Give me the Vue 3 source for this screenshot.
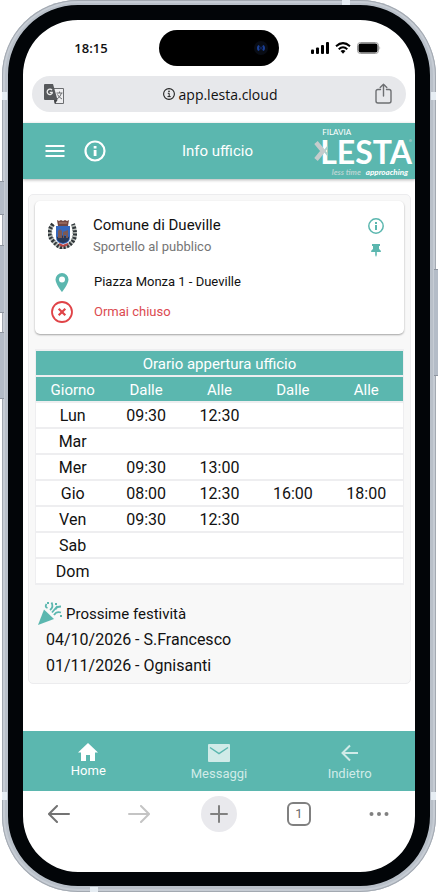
<template>
  <div class="stage">
    <div class="phone">
      <i class="side-key key-silent" />
      <i class="side-key key-up" />
      <i class="side-key key-down" />
      <i class="side-key key-power" />
      <i class="band band-top" />
      <i class="band band-bottom" />
      <i class="band band-side left upper" />
      <i class="band band-side right upper" />
      <i class="band band-side left lower" />
      <i class="band band-side right lower" />

      <div class="screen">
        <div class="status">
          <span class="time">18:15</span>
          <span class="island">
            <svg width="16" height="16" viewBox="0 0 16 16">
              <circle cx="8" cy="8" r="7" fill="#080c14" />
              <path d="M6 5.500Q4 8 6 10.500M10 5.500Q12 8 10 10.500" fill="none" stroke="#1b3f94" stroke-width="2" />
              <circle cx="8" cy="8" r="1.500" fill="#0c1f55" />
            </svg>
          </span>
          <span class="signals">
            <svg width="18" height="12" viewBox="0 0 18 12">
              <rect x="0" y="7.500" width="3" height="4.500" rx="1" />
              <rect x="5" y="5.500" width="3" height="6.500" rx="1" />
              <rect x="10" y="3" width="3" height="9" rx="1" />
              <rect x="15" y="0" width="3" height="12" rx="1" />
            </svg>
            <svg width="16" height="12" viewBox="0 0 16 12">
              <g fill="none" stroke="#000" stroke-width="2">
                <path d="M1 4.200Q8-2 15 4.200" />
                <path d="M3.700 7.200Q8 3.400 12.300 7.200" />
              </g>
              <path d="M5.500 9Q8 7 10.500 9L8 11.800z" />
            </svg>
            <svg width="24" height="12" viewBox="0 0 24 12">
              <rect x=".5" y=".5" width="21" height="11" rx="3" fill="none" stroke="#999" />
              <rect x="1.500" y="1.500" width="19" height="9" rx="2" />
              <path d="M22.500 4q1.500 2 0 4z" fill="#999" />
            </svg>
          </span>
        </div>

        <div class="address">
          <button class="plain" aria-label="Traduci">
            <svg width="21" height="21" viewBox="0 0 21 21">
              <path d="M9 4.500h10.500v15H11z" fill="#eeeef0" stroke="#6c6e71" />
              <path d="M12.500 9h6M15.500 7.500V9M17.500 9q-1 4-4.500 6M13.500 10.500q1.500 3 4.500 4.500" fill="none" stroke="#6c6e71" />
              <path d="M1 0h8l4.500 16H1q-1 0-1-1V1q0-1 1-1z" fill="#56585b" />
              <path d="M10 16h3.500L11 20z" fill="#3e4043" />
              <path d="M8 6.200A2.700 2.700 0 1 0 8.200 9.200V8.300H5.800" fill="none" stroke="#eee" stroke-width="1.300" />
            </svg>
          </button>
          <a class="url" href="#">
            <svg width="12" height="12" viewBox="0 0 12 12">
              <circle cx="6" cy="6" r="5.400" fill="none" stroke="#222" stroke-width="1.100" />
              <path d="M4.800 5.300h1.400v3.200M4.500 8.600h3.200" fill="none" stroke="#222" />
              <circle cx="6" cy="3.400" r=".8" fill="#222" />
            </svg>
            app.lesta.cloud
          </a>
          <button class="plain" aria-label="Condividi">
            <svg width="18" height="22" viewBox="0 0 18 22">
              <g fill="none" stroke="#6d6f72" stroke-width="1.400" stroke-linecap="round" stroke-linejoin="round">
                <path d="M5.500 6.500H3q-2 0-2 2V18q0 2 2 2h11q2 0 2-2V8.500q0-2-2-2h-2.500M8.500 13V1.200M5.200 4.500l3.300-3.300 3.300 3.300" />
              </g>
            </svg>
          </button>
        </div>

        <header class="app-bar">
          <div class="actions">
            <button class="plain" aria-label="Menu">
              <svg width="20" height="20" viewBox="0 0 20 20">
                <path d="M.5 5h19M.5 10h19M.5 15h19" stroke="#fff" stroke-width="2" />
              </svg>
            </button>
            <button class="plain" aria-label="Info">
              <svg width="22" height="22" viewBox="0 0 22 22">
                <circle cx="11" cy="11" r="9.500" fill="none" stroke="#fff" stroke-width="2.200" />
                <path d="M9.700 10h2.800v6H9.700zM9.700 6h2.800v2.400H9.700z" fill="#fff" />
              </svg>
            </button>
          </div>
          <h1>Info ufficio</h1>
          <div class="logo">
            <span class="logo-top">FILAVIA</span>
            <span class="logo-name">LESTA</span>
            <span class="logo-claim"><em>less time</em><em class="strong">approaching</em></span>
            <svg class="logo-mark" width="14" height="20" viewBox="0 0 14 20">
              <path d="M14 5.500 10.500 10l3.500 4.500" fill="none" stroke="#a9d2ce" stroke-width="2" />
              <path d="M2 1.500 9 10l-7 8.500" fill="none" stroke="#c6cccc" stroke-width="4.500" />
            </svg>
            <i class="logo-dot" />
          </div>
        </header>

        <main>
          <section class="panel">
            <article class="card">
              <svg class="crest" width="30" height="30" viewBox="0 0 30 30">
                <g fill="none">
                  <path d="M5 5Q-2 14 5 22T15 28Q21 28 25 22T25 5" stroke="#b8bdb9" stroke-width="4" />
                  <path d="M5 5Q-2 14 5 22T15 28Q21 28 25 22T25 5" stroke="#30363a" stroke-width="4" stroke-dasharray="2 1.500" />
                  <path d="M6 7Q1 14 7 21T15 26Q20 26 23 21T24 7" stroke="#6b7370" stroke-dasharray="1 2" />
                </g>
                <path d="M8 7h14v11q0 6-7 7-7-1-7-7z" fill="#3467bd" />
                <path d="M9 18q6-3 12 0v2q-1 3-6 4-5-1-6-4z" fill="#263858" />
                <path d="m10 12 2-2 2 2v7h-4zM15 13l5-2v8h-2v-3h-2v3h-1z" fill="#7b5955" />
                <path d="m9 1 2 1 2-1 2 1 2-1 2 1 2-1-1 6H10z" fill="#714641" />
                <path d="M11 4h8" stroke="#b98377" />
                <path d="m11 25 4 2 5-2" fill="none" stroke="#b94848" stroke-width="2" />
              </svg>
              <div class="who">
                <h2>Comune di Dueville</h2>
                <p>Sportello al pubblico</p>
              </div>
              <div class="tools">
                <button class="plain" aria-label="Dettagli">
                  <svg width="16" height="16" viewBox="0 0 16 16">
                    <circle cx="8" cy="8" r="7.200" fill="none" stroke="#5bb7af" stroke-width="1.500" />
                    <path d="M7 7h2v5H7zM7 4h2v2H7z" fill="#5bb7af" />
                  </svg>
                </button>
                <button class="plain" aria-label="Fissa">
                  <svg width="10" height="13" viewBox="0 0 10 13">
                    <path d="M1 0h8v2H8v3q2 1 2 3H5.800v3L5 13l-.8-2V8H0q0-2 2-3V2H1z" fill="#5bb7af" />
                  </svg>
                </button>
              </div>

              <svg class="row-icon" width="14" height="19" viewBox="0 0 14 19">
                <path fill-rule="evenodd" d="M7 0a6.500 6.500 0 0 1 6.500 6.500C13.500 11 7 19 7 19S.5 11 .5 6.500A6.500 6.500 0 0 1 7 0zm0 3.500a3 3 0 1 0 0 6 3 3 0 0 0 0-6z" fill="#5bb7af" />
              </svg>
              <p class="place">Piazza Monza 1 - Dueville</p>
              <svg class="row-icon" width="22" height="22" viewBox="0 0 22 22">
                <g fill="none" stroke="#e04347">
                  <circle cx="11" cy="11" r="10" stroke-width="1.800" />
                  <path d="m7.700 7.700 6.600 6.600m0-6.600-6.600 6.600" stroke-width="2.200" />
                </g>
              </svg>
              <p class="place closed">Ormai chiuso</p>
            </article>

            <table>
              <thead>
                <tr><th colspan="5">Orario appertura ufficio</th></tr>
                <tr><th v-for="(c, i) in columns" :key="i">{{ c }}</th></tr>
              </thead>
              <tbody>
                <tr v-for="row in hours" :key="row[0]">
                  <td v-for="n in 5" :key="n">{{ row[n - 1] }}</td>
                </tr>
              </tbody>
            </table>

            <div class="holidays">
              <h3>
                <svg width="24" height="24" viewBox="0 0 24 24">
                  <path d="M6 7.500 16 17 0 23z" fill="#5bb7af" />
                  <g fill="none" stroke="#5bb7af" stroke-width="1.800">
                    <path d="M8.500 2q-2 3 1 4M12 8q4-3 1.500-7.500M14 10.500l5.500-6.500M16 13q2.500-4 7-2.500M17.500 7.500q1-3 5.500-3" />
                  </g>
                  <path d="M9 0h2v2H9zM22 13h2v2h-2zM17 1h2v2h-2z" fill="#5bb7af" />
                </svg>
                Prossime festività
              </h3>
              <p v-for="h in holidays" :key="h">{{ h }}</p>
            </div>
          </section>
        </main>

        <nav class="tabs">
          <a href="#" class="active">
            <svg width="20" height="18" viewBox="0 0 20 18">
              <path d="M10 0 0 9.500h3V18h5v-6h4v6h5V9.500h3z" fill="currentColor" />
            </svg>
            Home
          </a>
          <a href="#">
            <svg width="22" height="18" viewBox="0 0 22 18">
              <rect width="22" height="18" rx="1" fill="currentColor" />
              <path d="m2 3.500 9 6 9-6" fill="none" stroke="#5bb7af" stroke-width="1.500" />
            </svg>
            Messaggi
          </a>
          <a href="#">
            <svg width="18" height="18" viewBox="0 0 18 18">
              <path d="M17 9H2M9 1.500 1.500 9 9 16.500" fill="none" stroke="currentColor" stroke-width="2" />
            </svg>
            Indietro
          </a>
        </nav>

        <div class="browser-bar">
          <button class="plain" aria-label="Pagina precedente">
            <svg width="22" height="18" viewBox="0 0 22 18">
              <path d="M21 9H1.500M9 1 1 9l8 8" fill="none" stroke="#737373" stroke-width="2" stroke-linecap="round" />
            </svg>
          </button>
          <button class="plain" aria-label="Pagina successiva">
            <svg width="22" height="18" viewBox="0 0 22 18">
              <path d="M1 9h19.500M13 1l8 8-8 8" fill="none" stroke="#c4c4c4" stroke-width="2" stroke-linecap="round" />
            </svg>
          </button>
          <button class="plain add" aria-label="Nuova scheda">
            <svg width="18" height="18" viewBox="0 0 18 18">
              <path d="M1 9h16M9 1v16" stroke="#808080" stroke-width="2" stroke-linecap="round" />
            </svg>
          </button>
          <button class="plain"><span class="count">1</span></button>
          <button class="plain" aria-label="Altro">
            <svg width="20" height="4" viewBox="0 0 20 4">
              <g fill="#808080">
                <circle cx="2.500" cy="2" r="2" />
                <circle cx="10" cy="2" r="2" />
                <circle cx="17.500" cy="2" r="2" />
              </g>
            </svg>
          </button>
        </div>
      </div>
    </div>
  </div>
</template>

<script setup>
const columns = ['Giorno', 'Dalle', 'Alle', 'Dalle', 'Alle'];

const hours = [
  ['Lun', '09:30', '12:30'],
  ['Mar'],
  ['Mer', '09:30', '13:00'],
  ['Gio', '08:00', '12:30', '16:00', '18:00'],
  ['Ven', '09:30', '12:30'],
  ['Sab'],
  ['Dom'],
];

const holidays = ['04/10/2026 - S.Francesco', '01/11/2026 - Ognisanti'];
</script>

<style>
body {
  margin: 0;
  background: #fff;
}
</style>

<style scoped>
* {
  box-sizing: border-box;
}
h1, h2, h3, p {
  margin: 0;
  font-weight: 400;
}
svg {
  display: block;
  flex: none;
}
a {
  color: inherit;
  text-decoration: none;
}
.plain {
  display: flex;
  align-items: center;
  justify-content: center;
  padding: 0;
  border: 0;
  background: none;
  font: inherit;
}
.stage {
  display: flex;
  min-height: 100vh;
  padding: 0 2px;
  font-family: Roboto, 'Liberation Sans', sans-serif;
  font-size: 16px;
  color: #111;
}

/* phone shell */
.phone {
  position: relative;
  display: flex;
  flex: 1;
  padding: 5px 6px 6px;
  border-radius: 76px;
  background: #b9c0c9;
  box-shadow: inset 0 0 0 1px #a3a9b1, inset 0 0 0 3px #c6ccd4;
}
.side-key {
  position: absolute;
  width: 4px;
  border: 1px solid #8f96a0;
  border-width: 1px 0;
  background: #b4bcc7;
}
.key-silent { left: -2px; top: 181px; height: 34px; }
.key-up { left: -2px; top: 245px; height: 68px; }
.key-down { left: -2px; top: 332px; height: 67px; }
.key-power { right: -2px; top: 269px; height: 107px; }
.band {
  position: absolute;
  background: #e6edf3;
}
.band-top { top: 0; right: 86px; width: 8px; height: 5px; }
.band-bottom { bottom: 0; left: 88px; width: 8px; height: 5px; }
.band-side { width: 5px; height: 8px; }
.left { left: 0; }
.right { right: 0; }
.upper { top: 92px; }
.lower { bottom: 92px; }
.screen {
  display: flex;
  flex: 1;
  flex-direction: column;
  min-width: 0;
  overflow: hidden;
  border: 15px solid #020508;
  border-bottom-width: 14px;
  border-radius: 70px;
  background: #fff;
}

/* system and browser chrome */
.status {
  display: grid;
  grid-template-columns: 1fr 120px 1fr;
  align-items: center;
  height: 56px;
  font-family: 'Open Sans', sans-serif;
}
.time {
  justify-self: center;
  font-size: 13px;
  font-weight: 600;
}
.island {
  display: flex;
  align-items: center;
  justify-content: flex-end;
  height: 36px;
  padding-right: 10px;
  border-radius: 18px;
  background: #000;
}
.signals {
  display: flex;
  justify-self: center;
  gap: 6px;
  padding-right: 2px;
}
.address {
  display: flex;
  align-items: center;
  justify-content: space-between;
  height: 36px;
  margin: 0 9px 11px;
  padding: 0 13px 0 12px;
  border-radius: 18px;
  background: #e7e8eb;
  font-family: 'Open Sans', sans-serif;
}
.url {
  display: flex;
  align-items: center;
  gap: 4px;
  font-size: 14px;
}

/* app */
.app-bar {
  display: grid;
  grid-template-columns: 1fr auto 1fr;
  align-items: center;
  height: 56px;
  padding-right: 3px;
  background: #5bb7af;
  box-shadow: 0 1px 3px rgba(0, 0, 0, 0.3);
  color: #fff;
}
.actions {
  display: flex;
  align-items: center;
  gap: 19px;
  padding-left: 22px;
}
h1 {
  font-size: 15px;
}
.logo {
  position: relative;
  display: flex;
  flex-direction: column;
  justify-self: end;
  padding-top: 3px;
  font-family: Lato, sans-serif;
}
.logo-top {
  padding-left: 2px;
  font-size: 8px;
  line-height: 9px;
}
.logo-name {
  font-size: 32px;
  font-weight: 700;
  line-height: 30px;
}
.logo-claim {
  display: flex;
  justify-content: flex-end;
  gap: 5px;
  padding-right: 4px;
  font-size: 8px;
  font-weight: 700;
  line-height: 10px;
  color: #b9d4d2;
}
.strong {
  color: #fff;
}
.logo-mark {
  position: absolute;
  top: 16px;
  left: -6px;
}
.logo-dot {
  position: absolute;
  top: 14px;
  right: 0;
  width: 3px;
  height: 3px;
  border-radius: 50%;
  background: #8fc3be;
}
main {
  flex: 1;
  padding: 15px 4px 16px 5px;
}
.panel {
  padding: 6px 6px 4px;
  border: 1px solid #ececee;
  border-radius: 5px;
  background: #f8f8f8;
}
.card {
  display: grid;
  grid-template-columns: 58px 1fr 56px;
  grid-template-rows: 54px 30px 30px;
  padding: 12px 0 7px;
  border-radius: 5px;
  background: #fff;
  box-shadow: 0 1px 2px rgba(0, 0, 0, 0.35);
}
.crest {
  margin: 6px 0 0 13px;
}
h2 {
  font-size: 15px;
  line-height: 24px;
}
.who p {
  font-size: 13px;
  line-height: 20px;
  color: #757575;
}
.tools {
  display: flex;
  flex-direction: column;
  align-items: center;
  gap: 10px;
  padding-top: 5px;
}
.row-icon {
  align-self: center;
  justify-self: center;
  margin-right: 4px;
}
.place {
  grid-column: span 2;
  padding-left: 1px;
  font-size: 13px;
  line-height: 30px;
}
.closed {
  color: #dc4a50;
}
table {
  width: 100%;
  margin-top: 15px;
  border-spacing: 0 2px;
  border-right: 1px solid #eeeef0;
  border-left: 1px solid #eeeef0;
  table-layout: fixed;
  background: #eeeef0;
  text-align: center;
}
th, td {
  height: 24px;
  padding: 2px 0 0;
  line-height: 22px;
}
th {
  background: #5bb7af;
  font-size: 15px;
  font-weight: 400;
  color: #fff;
}
td {
  background: #fff;
}
.holidays {
  margin-top: 16px;
  line-height: 26px;
}
.holidays p {
  padding-left: 11px;
}
h3 {
  display: flex;
  align-items: center;
  gap: 4px;
  padding-left: 3px;
  font-size: 15px;
}
.tabs {
  display: grid;
  grid-template-columns: repeat(3, 1fr);
  height: 60px;
  background: #5bb7af;
}
.tabs a {
  display: flex;
  flex-direction: column;
  align-items: center;
  gap: 4px;
  padding-top: 13px;
  font-size: 13px;
  line-height: 16px;
  color: #d0ebe8;
}
.tabs .active {
  gap: 2px;
  padding-top: 12px;
  color: #fff;
}
.browser-bar {
  display: flex;
  justify-content: space-between;
  padding: 5px 18px 40px;
}
.browser-bar button {
  width: 36px;
  height: 36px;
}
.add {
  border-radius: 50%;
  background: #e9e9ed;
}
.count {
  width: 24px;
  border: 2px solid #808080;
  border-radius: 6px;
  font-size: 13px;
  line-height: 20px;
  color: #6a6a6a;
}
</style>
